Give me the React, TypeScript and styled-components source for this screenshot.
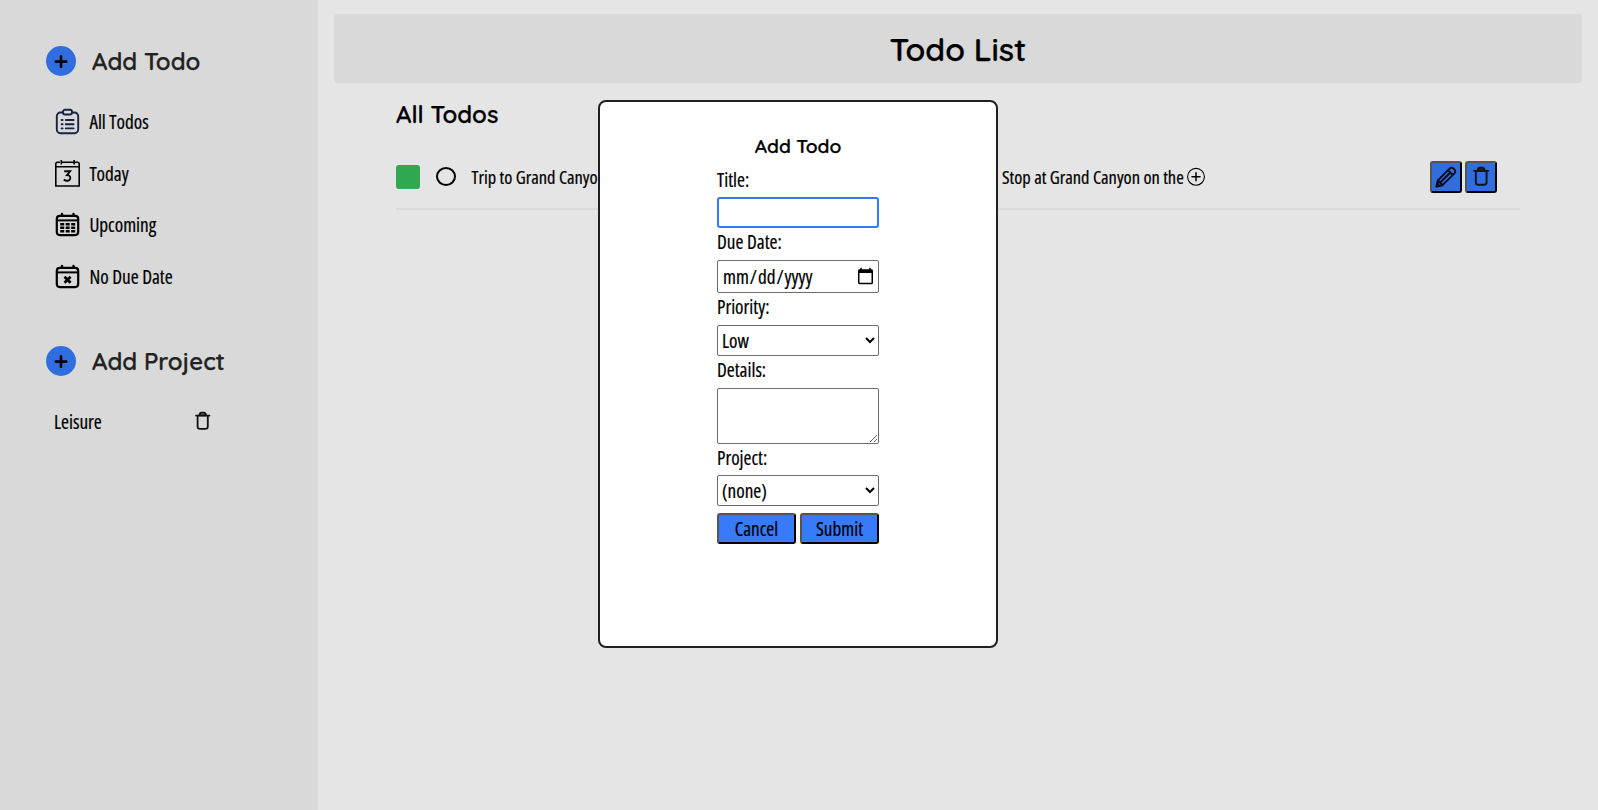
import React from "react";
import styled, { createGlobalStyle } from "styled-components";

const GlobalStyle = createGlobalStyle`
  * { box-sizing: border-box; }
  body {
    margin: 0;
    background: #e5e5e5;
    color: #000;
    font-family: "Open Sans", "Noto Sans", sans-serif;
    font-stretch: 75%;
    font-size: 19.2px;
    -webkit-text-stroke: 0.2px #000;
  }
  button, input, select, textarea { font: inherit; font-stretch: 75%; color: #000; }
`;

const Page = styled.div`
  display: flex;
  height: 810px;
  width: 100%;
  overflow: hidden;
`;

const Sidebar = styled.aside`
  width: 318px;
  flex: none;
  background: #d9d9d9;
  padding: 46px 0 0 46px;
`;

const Heading = styled.h2<{ $size: number; $color?: string }>`
  margin: 0;
  font-family: Quicksand, Lato, sans-serif;
  font-stretch: 100%;
  font-weight: 600;
  font-size: ${(p) => p.$size}px;
  line-height: 1.25;
  color: ${(p) => p.$color ?? "#000"};
  -webkit-text-stroke: 0.25px ${(p) => p.$color ?? "#000"};
  white-space: nowrap;
`;

const AddRow = styled.div`
  display: flex;
  align-items: center;
  height: 30px;
  gap: 16px;
`;

const AddButton = styled.button`
  width: 30px;
  height: 30px;
  padding: 0;
  border: 0;
  border-radius: 50%;
  background: #306ee0;
  display: grid;
  place-items: center;
`;

const NavList = styled.nav`
  display: flex;
  flex-direction: column;
  height: 270px;
  padding: 20px 0 0 8px;
`;

const NavItem = styled.a`
  display: flex;
  align-items: center;
  height: 51.6px;
  gap: 8.4px;
  svg { flex: none; }
`;

const ProjectRow = styled.div`
  display: flex;
  align-items: center;
  justify-content: space-between;
  width: 158px;
  height: 28px;
  margin: 31.4px 0 0 8px;
`;

const Main = styled.main`
  flex: 1;
  padding: 14px 16px 0;
  min-width: 0;
`;

const Header = styled.header`
  height: 69px;
  border-radius: 4px;
  background: #d9d9d9;
  display: flex;
  align-items: center;
  justify-content: center;
`;

const Content = styled.section`
  padding: 16px 62px 0;
`;

const TodoRow = styled.div`
  display: flex;
  align-items: center;
  height: 65px;
  margin-top: 16px;
  padding-right: 23px;
  border-bottom: 2px solid #dadada;
  font-size: 18.4px;
`;

const Priority = styled.span`
  width: 24px;
  height: 24px;
  border-radius: 3px;
  background: #30a852;
`;

const Check = styled.span`
  width: 20px;
  height: 19px;
  margin: 0 15.5px 0 16px;
  border: 2px solid #000;
  border-radius: 50%;
`;

const TodoTitle = styled.span`
  width: 530.5px;
  white-space: nowrap;
`;

const TodoDetails = styled.span`
  flex: 1;
  display: flex;
  align-items: center;
  gap: 3px;
  white-space: nowrap;
`;

const Actions = styled.div`
  display: flex;
  gap: 3px;
`;

const ActionButton = styled.button`
  width: 32px;
  height: 32px;
  padding: 0;
  border: 2px outset #000;
  border-radius: 3px;
  background: #306ee0;
  display: grid;
  place-items: center;
`;

const Modal = styled.div`
  position: absolute;
  left: 598px;
  top: 100px;
  width: 400px;
  height: 548px;
  border: 2px solid #202022;
  border-radius: 8px;
  background: #fff;
  display: flex;
  flex-direction: column;
  align-items: center;
  gap: 7px;
  padding-top: 32px;
`;

const Form = styled.form`
  width: 162px;
  display: flex;
  flex-direction: column;
`;

const Label = styled.label<{ $height?: number }>`
  height: ${(p) => p.$height ?? 32}px;
  line-height: 28px;

  &:first-child { line-height: 29px; }
`;

const TextInput = styled.input`
  height: 31px;
  border: 2px solid #3578f7;
  border-radius: 3px;
  outline: 0;
`;

const DateInput = styled.input`
  width: 100%;
  height: 33px;
  border: 1px solid #6b6b6b;
  border-radius: 2px;
  background: #fff;
  padding: 1px 1px 1px 4px;
`;

const Select = styled.select`
  height: 31px;
  border: 1px solid #6b6b6b;
  border-radius: 2px;
  background: #fff;
`;

const TextArea = styled.textarea`
  height: 56px;
  border: 1px solid #6b6b6b;
  border-radius: 2px;
`;

const Buttons = styled.div`
  display: grid;
  grid-template-columns: 1fr 1fr;
  gap: 4px;
  margin-top: 7px;
`;

const FormButton = styled.button`
  height: 31px;
  padding: 0;
  border: 2px outset #000;
  border-radius: 3px;
  background: #377bf8;
  line-height: 26px;
`;

const PlusIcon = () => (
  <svg width="14" height="14" viewBox="0 0 14 14" stroke="#000" strokeWidth="2.6" strokeLinecap="round">
    <path d="M7 2.4v10.4M1.8 7.6h10.4" />
  </svg>
);

const ClipboardIcon = () => (
  <svg width="27" height="28" viewBox="0 0 27 28" fill="none" stroke="#1b2142" strokeWidth="1.9" strokeLinecap="round">
    <path d="M9 4.5H6.4A3.6 3.6 0 0 0 2.8 8.1v13.5a3.6 3.6 0 0 0 3.6 3.6h14.2a3.6 3.6 0 0 0 3.6-3.6V8.1a3.6 3.6 0 0 0-3.6-3.6H18" />
    <rect x="9" y="1.8" width="9" height="4.7" rx="2" />
    <path d="M11.8 12h7.8M11.8 16.2h7.8M11.8 20.4h7.8M7.6 12h1M7.6 16.2h1M7.6 20.4h1" />
  </svg>
);

const TodayIcon = () => (
  <svg width="27" height="28" viewBox="0 0 27 28" fill="none" stroke="#000" strokeWidth="1.6">
    <path d="M6 3.2H3.6a1.8 1.8 0 0 0-1.8 1.8v22h23.4V5a1.8 1.8 0 0 0-1.8-1.8H21M7.5 3.2h12M1.8 7.7h23.4M7.3 1v4.5M20.2 1v4.5" />
    <path d="M10.2 12.3h5.9l-3.1 3.8c4.4-.2 4.3 5.7.2 5.7-1.4 0-2.5-.5-3.4-1.3" strokeWidth="1.9" />
  </svg>
);

const CalendarFrame = () => (
  <>
    <rect x="2.8" y="4.9" width="21.4" height="19.2" rx="3" strokeWidth="2.2" />
    <path d="M3 9.4h21" strokeWidth="2" />
    <path d="M8 2.9v2M19.5 2.9v2" strokeWidth="2.4" strokeLinecap="round" />
  </>
);

const UpcomingIcon = () => (
  <svg width="27" height="28" viewBox="0 0 27 28" fill="none" stroke="#000">
    <CalendarFrame />
    <path d="M6.2 13.3h4M11.7 13.3h4M17.2 13.3h4M6.2 16.8h4M11.7 16.8h4M17.2 16.8h4M6.2 20.3h4M11.7 20.3h4M17.2 20.3h4" strokeWidth="2.4" />
  </svg>
);

const NoDateIcon = () => (
  <svg width="27" height="28" viewBox="0 0 27 28" fill="none" stroke="#000">
    <CalendarFrame />
    <path d="M10.5 13.7l6.1 6.1M16.6 13.7l-6.1 6.1" strokeWidth="2.7" />
  </svg>
);

const TrashIcon = ({ size = 18 }: { size?: number }) => (
  <svg width={size} height={(size * 20) / 18} viewBox="0 0 18 20" fill="none" stroke="#111" strokeWidth="1.8" strokeLinecap="round" strokeLinejoin="round">
    <path d="M2 4.6h13.4M3.6 4.8v10.6A2.4 2.4 0 0 0 6 17.8h5.4a2.4 2.4 0 0 0 2.4-2.4V4.8" />
    <path d="M5.4 4.3c.3-1.5 1-2.6 2-2.6H10c1 0 1.700 1.100 2 2.600z" fill="#000" fillOpacity="0.4" />
  </svg>
);

const PencilIcon = () => (
  <svg width="22" height="22" viewBox="0 0 22 22" fill="none" stroke="#050a18" strokeWidth="1.9" strokeLinejoin="round">
    <path d="M1.5 20.5l1.3-6L14.6 2.6a2.7 2.7 0 0 1 4 0l.8.8a2.7 2.7 0 0 1 0 4L7.5 19.2zM2.8 14.5l4.7 4.7M13 4.2l4.8 4.8M5 16.7L15.4 6.5" />
    <path d="M1.5 20.5l.7-3 2.3 2.3z" fill="#050a18" />
  </svg>
);

const ExpandIcon = () => (
  <svg width="18" height="19" viewBox="0 0 18 19" fill="none" stroke="#000">
    <circle cx="9" cy="9.8" r="8.4" strokeWidth="1.1" />
    <path d="M9 5.8v8M5 9.8h8" strokeWidth="1.5" strokeLinecap="round" />
  </svg>
);

export default function App() {
  return (
    <Page>
      <GlobalStyle />
      <Sidebar>
        <AddRow>
          <AddButton aria-label="Add todo"><PlusIcon /></AddButton>
          <Heading $size={24} $color="#222">Add Todo</Heading>
        </AddRow>
        <NavList>
          <NavItem><ClipboardIcon />All Todos</NavItem>
          <NavItem><TodayIcon />Today</NavItem>
          <NavItem><UpcomingIcon />Upcoming</NavItem>
          <NavItem><NoDateIcon />No Due Date</NavItem>
        </NavList>
        <AddRow>
          <AddButton aria-label="Add project"><PlusIcon /></AddButton>
          <Heading $size={24} $color="#222">Add Project</Heading>
        </AddRow>
        <ProjectRow>
          Leisure
          <TrashIcon />
        </ProjectRow>
      </Sidebar>
      <Main>
        <Header>
          <Heading as="h1" $size={32}>Todo List</Heading>
        </Header>
        <Content>
          <Heading $size={24}>All Todos</Heading>
          <TodoRow>
            <Priority />
            <Check />
            <TodoTitle>Trip to Grand Canyon</TodoTitle>
            <TodoDetails>Stop at Grand Canyon on the<ExpandIcon /></TodoDetails>
            <Actions>
              <ActionButton aria-label="Edit"><PencilIcon /></ActionButton>
              <ActionButton aria-label="Delete"><TrashIcon size={19} /></ActionButton>
            </Actions>
          </TodoRow>
        </Content>
      </Main>
      <Modal>
        <Heading $size={19.2}>Add Todo</Heading>
        <Form>
          <Label>Title:</Label>
          <TextInput />
          <Label>Due Date:</Label>
          <DateInput type="date" />
          <Label>Priority:</Label>
          <Select><option>Low</option></Select>
          <Label>Details:</Label>
          <TextArea />
          <Label $height={31}>Project:</Label>
          <Select><option>(none)</option></Select>
          <Buttons>
            <FormButton type="button">Cancel</FormButton>
            <FormButton type="button">Submit</FormButton>
          </Buttons>
        </Form>
      </Modal>
    </Page>
  );
}
